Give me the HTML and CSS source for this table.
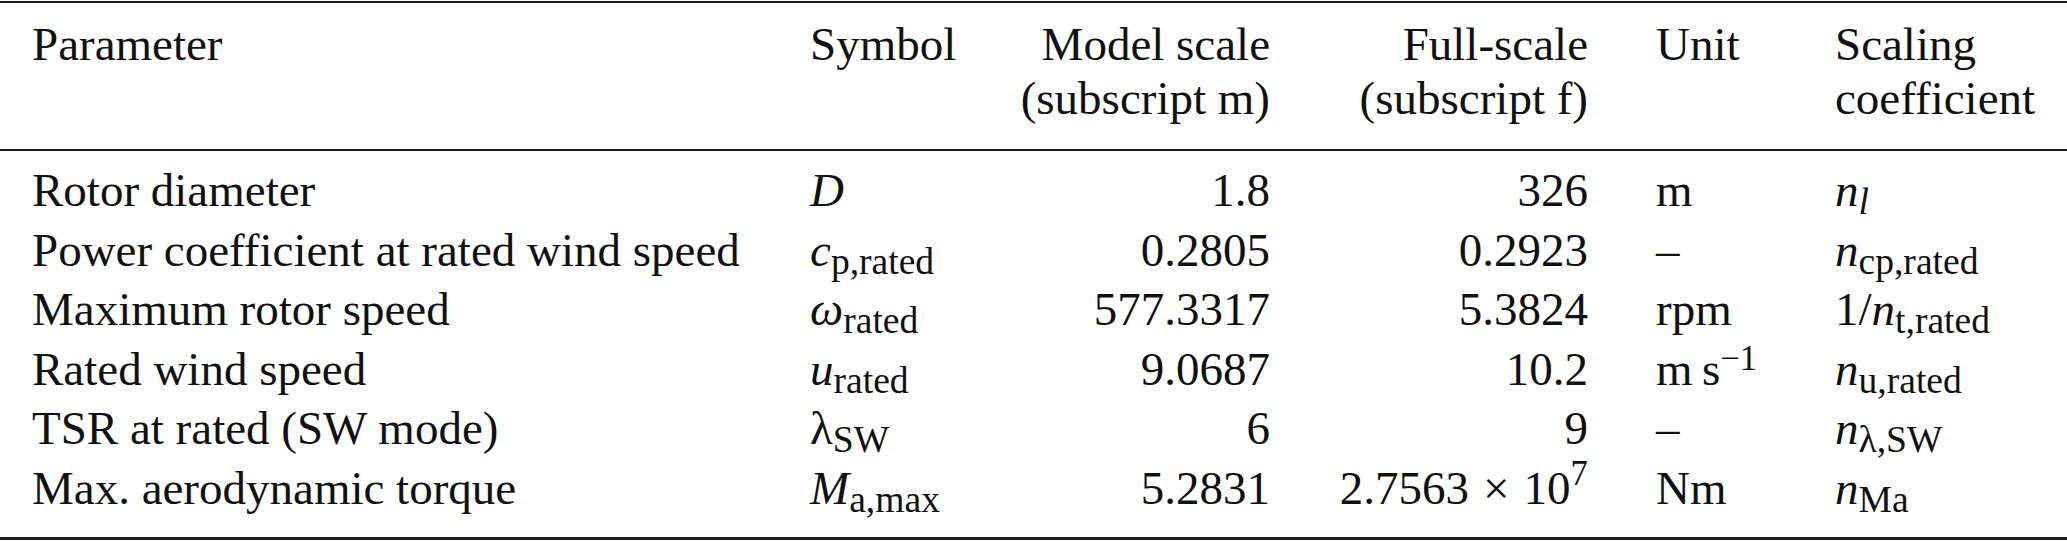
FILE: index.html
```html
<!DOCTYPE html>
<html lang="en">

<head>
    <meta charset="UTF-8">
    <title>Model and full-scale parameters</title>
    <link rel="stylesheet" href="styles.css">
</head>

<body>

    <!-- Scaling table -->
    <table class="params">
        <colgroup>
            <col class="w-param">
            <col class="w-sym">
            <col class="w-model">
            <col class="w-full">
            <col class="w-unit">
            <col class="w-scale">
        </colgroup>
        <thead>
            <tr>
                <th class="param">Parameter</th>
                <th>Symbol</th>
                <th class="num">Model scale<br>(subscript m)</th>
                <th class="num">Full-scale<br>(subscript f)</th>
                <th class="unit">Unit</th>
                <th>Scaling<br>coefficient</th>
            </tr>
        </thead>
        <tbody>
            <tr>
                <td class="param">Rotor diameter</td>
                <td><i>D</i></td>
                <td class="num">1.8</td>
                <td class="num">326</td>
                <td class="unit">m</td>
                <td><i>n</i><sub><i>l</i></sub></td>
            </tr>
            <tr>
                <td class="param">Power coefficient at rated wind speed</td>
                <td><i>c</i><sub>p,rated</sub></td>
                <td class="num">0.2805</td>
                <td class="num">0.2923</td>
                <td class="unit">–</td>
                <td><i>n</i><sub>cp,rated</sub></td>
            </tr>
            <tr>
                <td class="param">Maximum rotor speed</td>
                <td><i>ω</i><sub>rated</sub></td>
                <td class="num">577.3317</td>
                <td class="num">5.3824</td>
                <td class="unit">rpm</td>
                <td>1/<i>n</i><sub>t,rated</sub></td>
            </tr>
            <tr>
                <td class="param">Rated wind speed</td>
                <td><i>u</i><sub>rated</sub></td>
                <td class="num">9.0687</td>
                <td class="num">10.2</td>
                <td class="unit">m&thinsp;s<sup class="unit-exp">−1</sup></td>
                <td><i>n</i><sub>u,rated</sub></td>
            </tr>
            <tr>
                <td class="param">TSR at rated (SW mode)</td>
                <td>λ<sub>SW</sub></td>
                <td class="num">6</td>
                <td class="num">9</td>
                <td class="unit">–</td>
                <td><i>n</i><sub>λ,SW</sub></td>
            </tr>
            <tr>
                <td class="param">Max. aerodynamic torque</td>
                <td><i>M</i><sub>a,max</sub></td>
                <td class="num">5.2831</td>
                <td class="num">2.7563<span class="times">×</span>10<sup>7</sup></td>
                <td class="unit">Nm</td>
                <td><i>n</i><sub>Ma</sub></td>
            </tr>
        </tbody>
    </table>

</body>

</html>
```

FILE: styles.css
```css
body {
    font-family: "Liberation Serif", "Times New Roman", serif;
    font-size: 47px;
    color: #111;
    background: #fff;
    margin: 0;
}

/* Table frame */
.params {
    width: 2067px;
    border-collapse: collapse;
    table-layout: fixed;
    margin-top: 1px;
}

.w-param { width: 810px; }
.w-sym { width: 190px; }
.w-model { width: 270px; }
.w-full { width: 318px; }
.w-unit { width: 247px; }
.w-scale { width: 232px; }

th,
td {
    padding: 0;
    font-weight: normal;
    text-align: left;
    white-space: nowrap;
}

/* Header rows */
thead th {
    line-height: 54px;
    padding-top: 14px;
    padding-bottom: 24px;
    vertical-align: top;
    border-top: 2px solid #1c1c1c;
    border-bottom: 2px solid #1c1c1c;
}

/* Body rows */
tbody td {
    line-height: 59.6px;
    vertical-align: baseline;
}

tbody tr:first-child td {
    padding-top: 10px;
}

tbody tr:last-child td {
    padding-bottom: 18px;
    border-bottom: 3px solid #1c1c1c;
}

.params .param {
    padding-left: 32px;
}

.params .num {
    text-align: right;
}

.params .unit {
    padding-left: 68px;
}

/* Math bits */
sub {
    font-size: 0.8em;
    vertical-align: -0.2em;
    line-height: 0;
}

sup {
    font-size: 0.74em;
    vertical-align: 0.56em;
    line-height: 0;
}

sup.unit-exp {
    vertical-align: 0.42em;
}

.times {
    margin: 0 0.3em;
}
```
